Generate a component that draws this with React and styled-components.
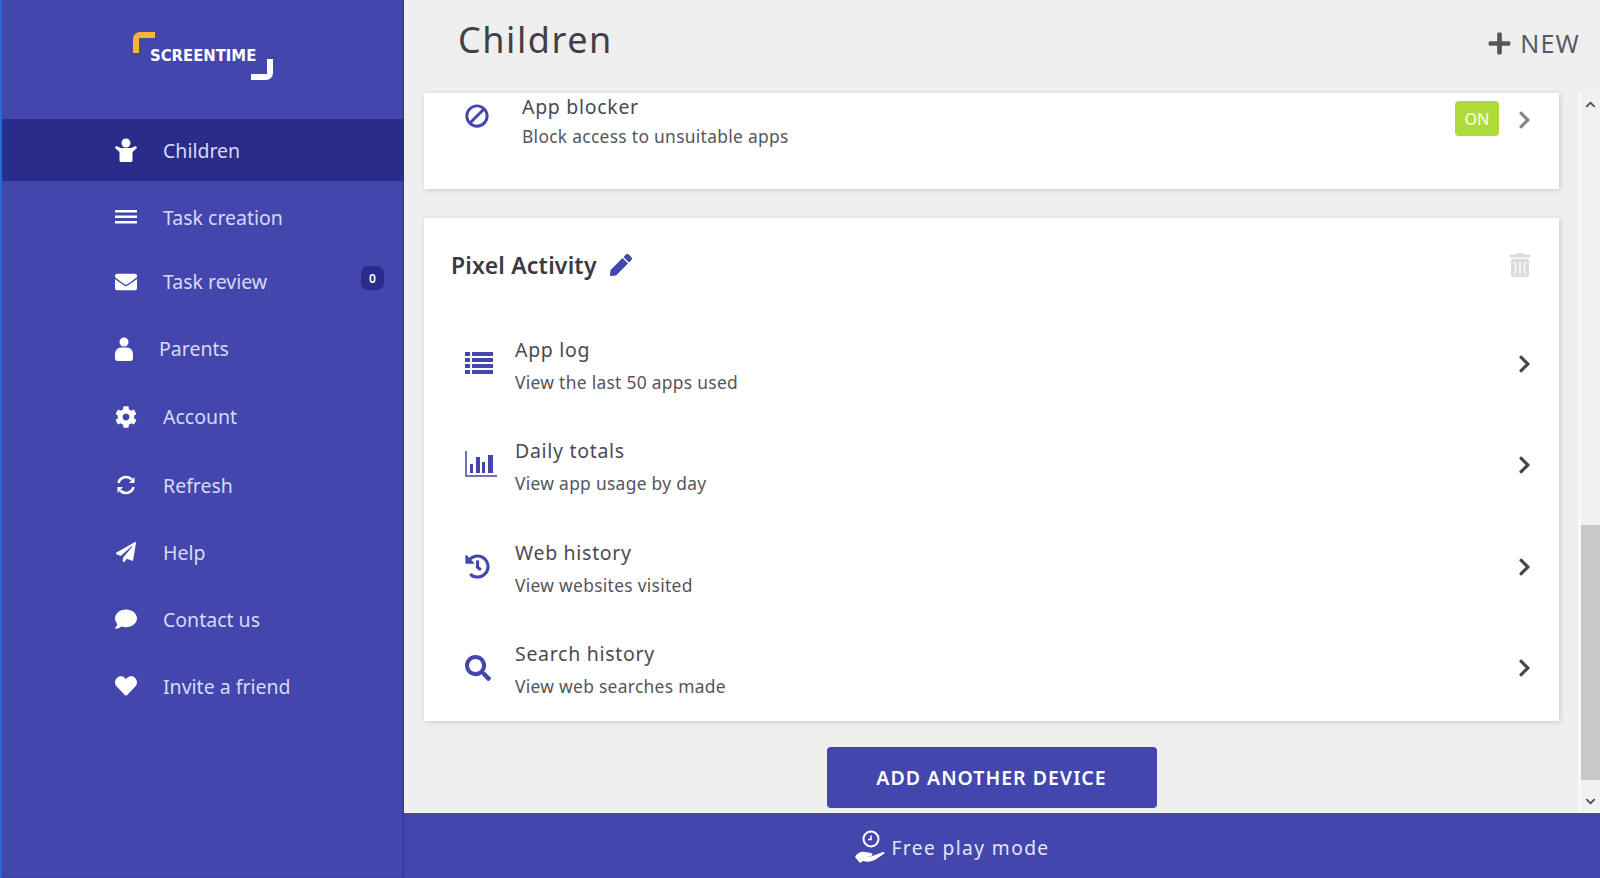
import React from 'react'
import styled, { createGlobalStyle } from 'styled-components'
import {
  FaBan, FaChevronDown, FaChevronRight, FaChevronUp, FaCog, FaComment,
  FaEnvelope, FaHeart, FaHistory, FaPaperPlane, FaPen, FaPlus, FaSearch, FaTrashAlt,
} from 'react-icons/fa'

const BLUE = '#4346ad'
const DARK = '#2a2b8a'
const FONT = '"Noto Sans", "Open Sans", sans-serif'

const GlobalStyle = createGlobalStyle`
  html, body { margin: 0; height: 100%; }
  body { font-family: ${FONT}; background: #efefef; overflow: hidden; }
  * { box-sizing: border-box; }
`

// drawn by hand, the icon packs have nothing close enough
const ChildIcon = () => (
  <svg width="22" height="24" viewBox="0 0 22 24" fill="#fff">
    <circle cx="11" cy="5" r="4.500" />
    <path d="M1 8l5 2h10l5-2 1 2-4.500 4v8.500c0 .8-.7 1.500-1.500 1.500H6c-.8 0-1.500-.7-1.500-1.500V14L0 10z" />
  </svg>
)
const MenuIcon = () => (
  <svg width="22" height="14" viewBox="0 0 22 14" fill="#fff">
    <rect y="0" width="22" height="2.500" />
    <rect y="5.500" width="22" height="2.500" />
    <rect y="11" width="22" height="2.500" />
  </svg>
)
const UserIcon = () => (
  <svg width="18" height="24" viewBox="0 0 18 24" fill="#fff">
    <circle cx="9" cy="5" r="4.500" />
    <path d="M6 10.500h6c3.500 0 6 3 6 7v4c0 1.400-1 2.500-2.500 2.500h-13C1 24 0 22.900 0 21.500v-4c0-4 2.500-7 6-7z" />
  </svg>
)
const RefreshIcon = () => (
  <svg width="22" height="22" viewBox="0 0 22 22" fill="none" stroke="#fff" strokeWidth="2.600">
    <path d="M3.500 9A7.800 7.800 0 0 1 16.800 5.500" />
    <path d="M18.500 13A7.800 7.800 0 0 1 5.200 16.500" />
    <path d="M19.500 3v6h-5.500z" fill="#fff" stroke="none" />
    <path d="M2.500 19v-6H8z" fill="#fff" stroke="none" />
  </svg>
)
const ListIcon = () => (
  <svg width="28" height="22" viewBox="0 0 28 22" fill={BLUE}>
    {[0, 6, 12, 18].map(y => (
      <g key={y}>
        <rect x="0" y={y} width="5" height="4" />
        <rect x="7" y={y} width="21" height="4" />
      </g>
    ))}
  </svg>
)
const ChartIcon = () => (
  <svg width="32" height="27" viewBox="0 0 32 27" fill={BLUE}>
    <path d="M1 0v25h31" fill="none" stroke={BLUE} strokeWidth="1.500" />
    <rect x="5" y="13" width="3" height="9" />
    <rect x="11" y="6" width="4" height="16" />
    <rect x="17" y="11" width="3" height="11" />
    <rect x="23" y="4" width="5" height="18" />
  </svg>
)
const FreePlayIcon = () => (
  <svg width="32" height="36" viewBox="0 0 32 36" fill="none">
    <circle cx="17" cy="10" r="7.500" stroke="#fff" strokeWidth="2" />
    <path d="M17 6.500v4h-3" stroke="#fff" strokeWidth="1.600" />
    <path d="M1 28c2-4 6-6 10-5l6 1c2 .4 2 2.600 0 3h-4c3 .8 6 .2 8-1l8-3c1.400-.5 2 1 1 1.800l-8 5.500c-4 2.600-9 3-13 1.700l-3 2-5-6z" fill="#fff" />
  </svg>
)

const navItems = [
  { label: 'Children', icon: <ChildIcon />, active: true, h: 62 },
  { label: 'Task creation', icon: <MenuIcon />, dy: 5 },
  { label: 'Task review', icon: <FaEnvelope />, badge: 0 },
  { label: 'Parents', icon: <UserIcon />, w: 18 },
  { label: 'Account', icon: <FaCog />, dy: 2 },
  { label: 'Refresh', icon: <RefreshIcon />, dy: 5 },
  { label: 'Help', icon: <FaPaperPlane size={20} />, dy: 5 },
  { label: 'Contact us', icon: <FaComment />, dy: 5 },
  { label: 'Invite a friend', icon: <FaHeart />, dy: 5 },
]

const deviceRows = [
  { title: 'App log', text: 'View the last 50 apps used', icon: <ListIcon /> },
  { title: 'Daily totals', text: 'View app usage by day', icon: <ChartIcon /> },
  { title: 'Web history', text: 'View websites visited', icon: <FaHistory size={25} /> },
  { title: 'Search history', text: 'View web searches made', icon: <FaSearch size={26} /> },
]

const Page = styled.div`
  display: grid;
  grid-template-columns: 404px 1fr;
  height: 878px;
  width: 1600px;
  overflow: hidden;
`
const Sidebar = styled.aside`
  background: ${BLUE};
  border-left: 2px solid #1f6fd0;
  box-shadow: inset -1px 0 1px rgba(20, 20, 90, 0.35);
  display: flex;
  flex-direction: column;
`
const LogoWrap = styled.div`
  height: 119px;
  padding: 32px 0 0 130px;
`
const Logo = styled.div`
  position: relative;
  width: 141px;
  height: 48px;
  color: #fff;
  font-family: "DejaVu Sans Condensed", "Liberation Sans", sans-serif;
  font-weight: 700;
  font-size: 16.5px;
  line-height: 47px;
  padding-left: 18px;
`
const Corner = styled.span`
  position: absolute;
  width: 22px;
  height: 21px;
  border-style: solid;
  border-color: ${p => (p.$end ? '#fff' : '#f9b233')};
  border-width: ${p => (p.$end ? '0 6px 6px 0' : '6px 0 0 6px')};
  border-radius: ${p => (p.$end ? '0 0 7px 0' : '7px 0 0 0')};
  ${p => (p.$end ? 'right: 0; bottom: 0;' : 'left: 1px; top: 0;')}
`
const NavRow = styled.div`
  display: flex;
  align-items: center;
  gap: 26px;
  height: ${p => p.$h || 67}px;
  padding: ${p => p.$dy || 0}px 20px 0 113px;
  background: ${p => (p.$active ? DARK : 'transparent')};
  color: #d9d9f3;
  font-size: 19.5px;
  position: relative;
  svg { color: #fff; display: block; }
`
const NavIcon = styled.span`
  width: ${p => p.$w || 22}px;
  display: flex;
  justify-content: center;
  font-size: 22px;
`
const Badge = styled.span`
  position: absolute;
  right: 20px;
  top: 18px;
  width: 23px;
  height: 24px;
  border-radius: 7px;
  background: ${DARK};
  color: #fff;
  font-size: 12px;
  font-weight: 600;
  display: flex;
  align-items: center;
  justify-content: center;
`
const Main = styled.main`
  display: flex;
  flex-direction: column;
  min-width: 0;
  height: 878px;
`
const Header = styled.header`
  height: 93px;
  flex: none;
  display: flex;
  align-items: flex-start;
  justify-content: space-between;
  padding: 13px 20px 0 54px;
`
const Title = styled.h1`
  margin: 0;
  font-size: 36px;
  font-weight: 400;
  letter-spacing: 1.55px;
  color: #3f4048;
  line-height: 54px;
`
const NewButton = styled.div`
  display: flex;
  align-items: center;
  gap: 8px;
  color: #5a5a62;
  font-size: 25px;
  letter-spacing: 1.2px;
  margin-top: 14px;
  line-height: 32px;
  svg { font-size: 25px; color: #55555c; }
`
const Body = styled.div`
  flex: 1;
  display: flex;
  min-height: 0;
`
const Scroller = styled.div`
  flex: 1;
  min-width: 0;
  padding: 0 19px 0 20px;
  display: flex;
  flex-direction: column;
`
const Scrollbar = styled.div`
  width: 22px;
  flex: none;
  display: flex;
  flex-direction: column;
  background: #f1f1f1;
  border-left: 3px solid #f9f9f9;
`
const ScrollArrow = styled.div`
  height: ${p => p.$h}px;
  padding-top: ${p => p.$pt || 0}px;
  display: flex;
  align-items: center;
  justify-content: center;
  color: #505050;
  font-size: 11px;
`
const ScrollTrack = styled.div`
  flex: 1;
  display: flex;
  flex-direction: column;
  justify-content: flex-end;
`
const ScrollThumb = styled.div`
  height: 255px;
  background: #c8c8c8;
`
const Card = styled.section`
  background: #fff;
  box-shadow: 1px 1px 5px rgba(0, 0, 0, 0.16);
  margin-bottom: ${p => p.$mb || 0}px;
  padding: ${p => p.$pad};
  flex: none;
`
const BlockerRow = styled.div`
  display: grid;
  grid-template-columns: 57px 1fr auto 13px;
  align-items: start;
  padding: 0 28px 0 41px;
  height: 96px;
`
const DeviceHead = styled.div`
  display: flex;
  align-items: center;
  padding: 0 27px;
  height: 61px;
  margin-bottom: 20px;
`
const DeviceName = styled.h2`
  margin: 0;
  font-size: 23px;
  font-weight: 600;
  letter-spacing: 0.2px;
  color: #3a3b44;
  margin-right: 13px;
`
const Trash = styled.span`
  margin-left: auto;
  color: #dcdcdc;
  font-size: 24px;
  display: flex;
`
const RowIcon = styled.span`
  color: ${BLUE};
  font-size: 24px;
  display: flex;
`
const Row = styled.div`
  display: grid;
  grid-template-columns: 50px 1fr 13px;
  align-items: center;
  height: 101.5px;
  padding: 0 28px 0 41px;
`
const RowIconNudged = styled(RowIcon)`
  margin-bottom: 5px;
`
const RowTitle = styled.div`
  font-size: 19.5px;
  letter-spacing: 0.7px;
  color: #4a4a52;
  line-height: 32px;
`
const RowText = styled.div`
  font-size: 17.4px;
  letter-spacing: 0.3px;
  color: #55555c;
  line-height: 32px;
`
const BlockerTitle = styled(RowTitle)`
  line-height: 28px;
`
const BlockerText = styled(RowText)`
  line-height: 30px;
`
const Chevron = styled.span`
  color: ${p => (p.$muted ? '#85858c' : '#46464e')};
  font-size: 20px;
  display: flex;
  justify-content: center;
  margin-top: ${p => p.$mt || 0}px;
  margin-bottom: ${p => p.$mb || 0}px;
`
const OnBadge = styled.span`
  width: 44px;
  height: 35px;
  margin: 8px 19px 0 0;
  border-radius: 4px;
  background: #aedb3c;
  color: #f4fbdc;
  font-size: 16px;
  font-weight: 500;
  display: flex;
  align-items: center;
  justify-content: center;
`
const BlockerIcon = styled(RowIcon)`
  margin-top: 11px;
  svg { transform: scaleX(-1); }
`
const AddDevice = styled.button`
  align-self: center;
  flex: none;
  width: 330px;
  height: 61px;
  margin: 26px 0 0 0;
  background: ${BLUE};
  color: #fff;
  border: 0;
  border-radius: 4px;
  font-family: ${FONT};
  font-size: 19.5px;
  font-weight: 600;
  letter-spacing: 1px;
`
const FreePlay = styled.footer`
  height: 66px;
  flex: none;
  background: ${BLUE};
  border-top: 1px solid #fafafa;
  display: flex;
  align-items: center;
  justify-content: center;
  gap: 5px;
  color: #e4e4f7;
  font-size: 19.2px;
  letter-spacing: 1.4px;
  padding: 3px 100px 0 0;
`

export default function App() {
  return (
    <Page>
      <GlobalStyle />
      <Sidebar>
        <LogoWrap>
          <Logo>
            <Corner />
            SCREENTIME
            <Corner $end />
          </Logo>
        </LogoWrap>
        {navItems.map(({ label, icon, active, badge, w, h, dy }) => (
          <NavRow key={label} $active={active} $h={h} $dy={dy}>
            <NavIcon $w={w}>{icon}</NavIcon>
            {label}
            {badge !== undefined && <Badge>{badge}</Badge>}
          </NavRow>
        ))}
      </Sidebar>
      <Main>
        <Header>
          <Title>Children</Title>
          <NewButton><FaPlus />NEW</NewButton>
        </Header>
        <Body>
          <Scroller>
            <Card $mb={29}>
              <BlockerRow>
                <BlockerIcon><FaBan /></BlockerIcon>
                <div>
                  <BlockerTitle>App blocker</BlockerTitle>
                  <BlockerText>Block access to unsuitable apps</BlockerText>
                </div>
                <OnBadge>ON</OnBadge>
                <Chevron $muted $mt={17}><FaChevronRight /></Chevron>
              </BlockerRow>
            </Card>
            <Card $pad="16px 0 0">
              <DeviceHead>
                <DeviceName>Pixel Activity</DeviceName>
                <RowIcon><FaPen size={22} /></RowIcon>
                <Trash><FaTrashAlt /></Trash>
              </DeviceHead>
              {deviceRows.map(({ title, text, icon }) => (
                <Row key={title}>
                  <RowIconNudged>{icon}</RowIconNudged>
                  <div>
                    <RowTitle>{title}</RowTitle>
                    <RowText>{text}</RowText>
                  </div>
                  <Chevron $mb={4}><FaChevronRight /></Chevron>
                </Row>
              ))}
            </Card>
            <AddDevice>ADD ANOTHER DEVICE</AddDevice>
          </Scroller>
          <Scrollbar>
            <ScrollArrow $h={22}><FaChevronUp /></ScrollArrow>
            <ScrollTrack><ScrollThumb /></ScrollTrack>
            <ScrollArrow $h={32} $pt={10}><FaChevronDown /></ScrollArrow>
          </Scrollbar>
        </Body>
        <FreePlay>
          <FreePlayIcon />
          Free play mode
        </FreePlay>
      </Main>
    </Page>
  )
}
